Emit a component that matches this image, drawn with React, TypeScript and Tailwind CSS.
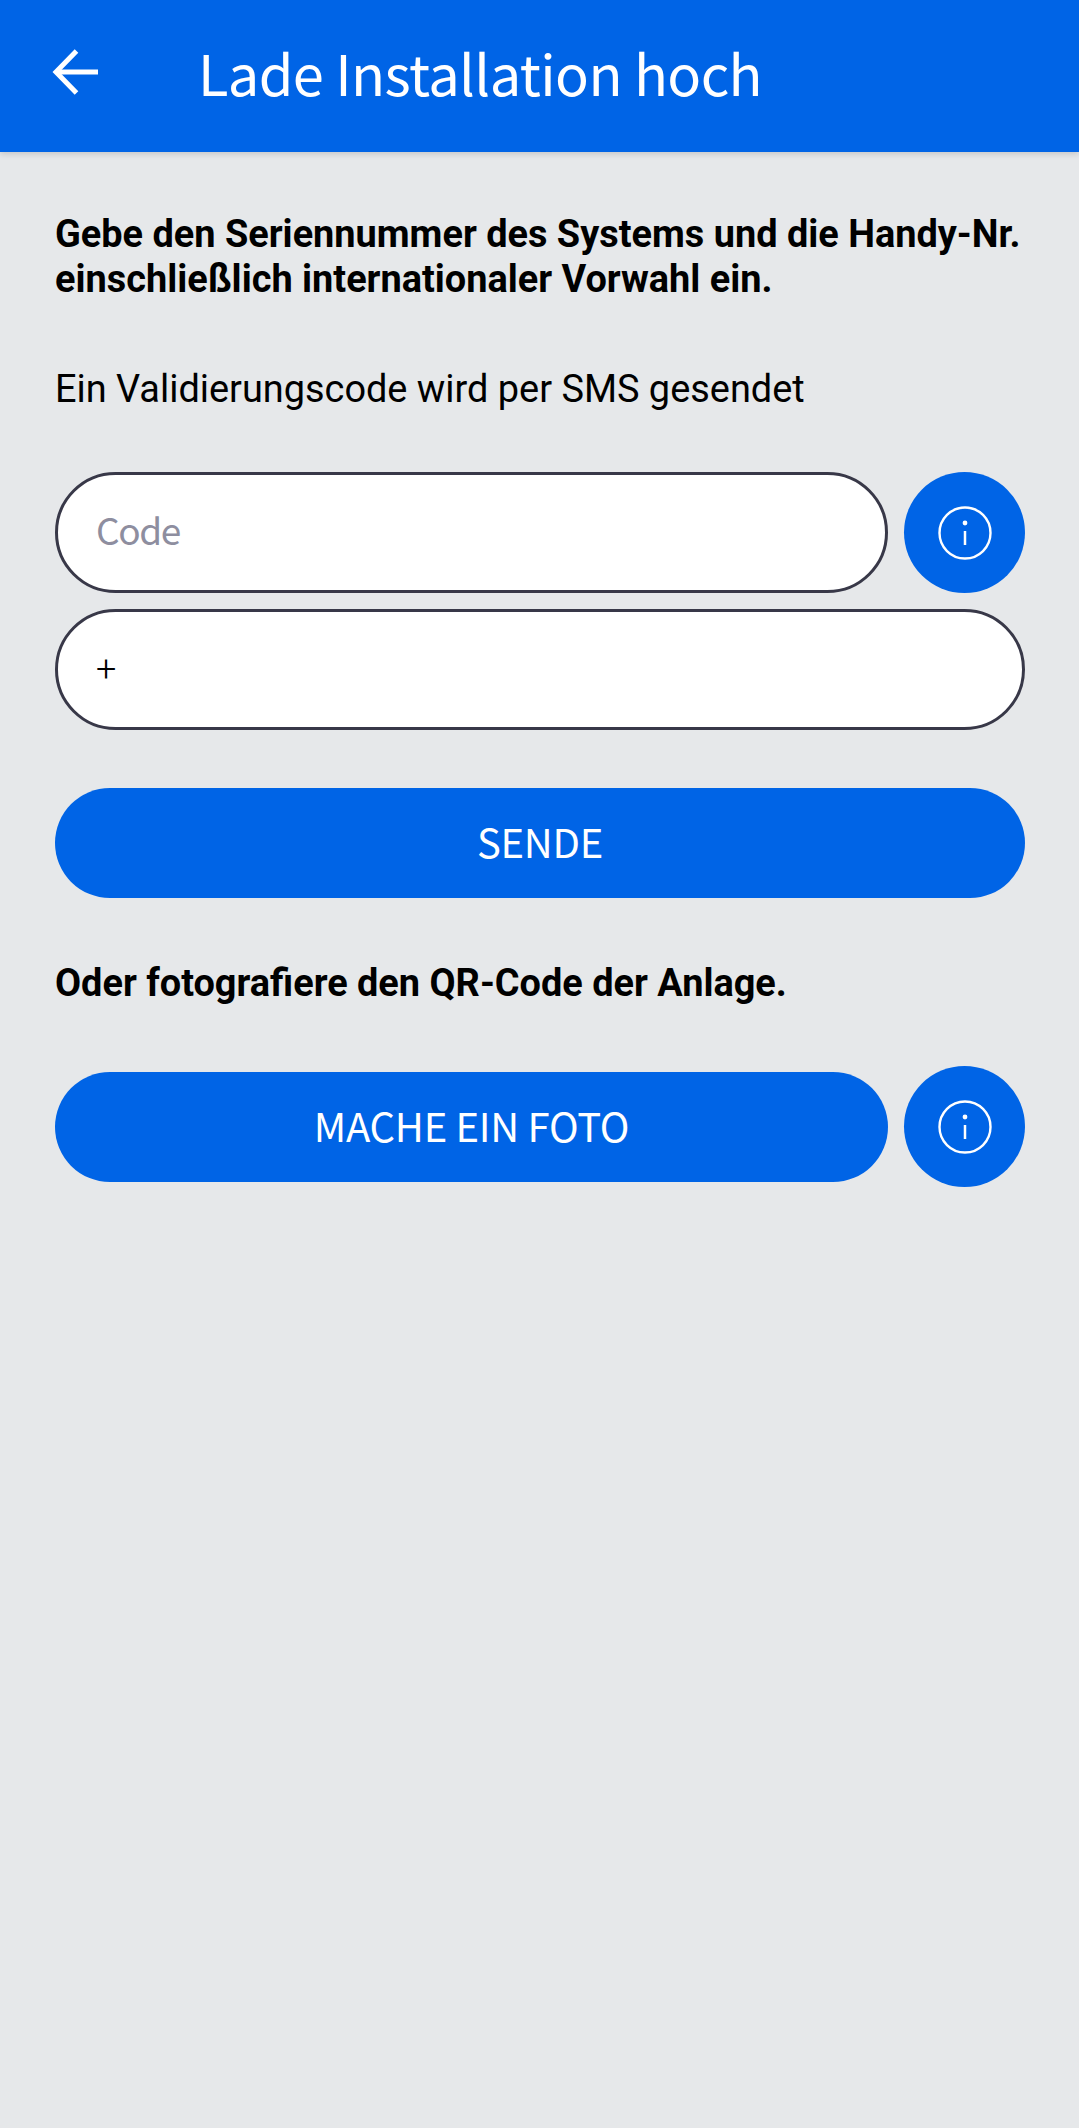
import React from "react";

function InfoButton() {
  return (
    <button className="flex h-[121px] w-[121px] shrink-0 items-center justify-center rounded-full bg-[#0064e6]">
      <svg width="54" height="54" viewBox="0 0 54 54" fill="none" stroke="white" strokeWidth="2.4">
        <circle cx="27" cy="27" r="25.5" />
        <line x1="27" y1="25" x2="27" y2="39" strokeWidth="2.5" />
        <circle cx="27" cy="17" r="1.2" fill="white" />
      </svg>
    </button>
  );
}

export default function App(): React.ReactElement {
  return (
    <div className="flex min-h-[2128px] flex-col bg-[#e6e8ea] font-['Roboto',sans-serif] text-black">
      <header className="flex h-[152px] items-center bg-[#0064e6] pl-[52px] text-white shadow-[0_2px_6px_rgba(0,0,0,0.15)]">
        <svg className="-mt-[8px]" width="46" height="46" viewBox="0 0 46 46" fill="none" stroke="white" strokeWidth="5">
          <path d="M24.5 2 L4 23 L24.5 44" />
          <path d="M4 23 H46" />
        </svg>
        <h1 className="ml-[100px] -mt-[8px] font-['Noto_Sans_CJK_SC',sans-serif] text-[56px] leading-none font-normal tracking-[-0.6px]">
          Lade Installation hoch
        </h1>
      </header>

      <main className="flex flex-col pr-[54px] pl-[55px]">
        <p className="mt-[60px] text-[37.9px] leading-[45px] font-bold">
          Gebe den Seriennummer des Systems und die Handy-Nr. einschließlich internationaler Vorwahl ein.
        </p>
        <p className="mt-[65px] text-[37.9px] leading-[45px]">Ein Validierungscode wird per SMS gesendet</p>

        <div className="mt-[60px] flex items-center gap-[16px]">
          <input
            placeholder="Code"
            className="h-[121px] min-w-0 flex-1 rounded-full border-[3px] border-[#383848] bg-white px-[38px] pb-[8px] font-['Noto_Sans_CJK_SC',sans-serif] text-[37px] tracking-[-1.4px] outline-none placeholder:text-[#8e8e9f]"
          />
          <InfoButton />
        </div>

        <div className="mt-[16px] flex h-[121px] items-center rounded-full border-[3px] border-[#383848] bg-white px-[38px] pb-[2px]">
          <span className="text-[36px] font-light">+</span>
        </div>

        <button className="mt-[58px] h-[110px] rounded-full bg-[#0064e6] pb-[4px] font-['Noto_Sans_CJK_SC',sans-serif] text-[40px] tracking-[-0.3px] text-white">
          SENDE
        </button>

        <p className="mt-[63px] text-[37.9px] leading-[45px] font-bold">Oder fotografiere den QR-Code der Anlage.</p>

        <div className="mt-[60px] flex items-center gap-[16px]">
          <button className="h-[110px] flex-1 rounded-full bg-[#0064e6] pb-[4px] font-['Noto_Sans_CJK_SC',sans-serif] text-[40px] tracking-[-0.3px] text-white">
            MACHE EIN FOTO
          </button>
          <InfoButton />
        </div>
      </main>
    </div>
  );
}
